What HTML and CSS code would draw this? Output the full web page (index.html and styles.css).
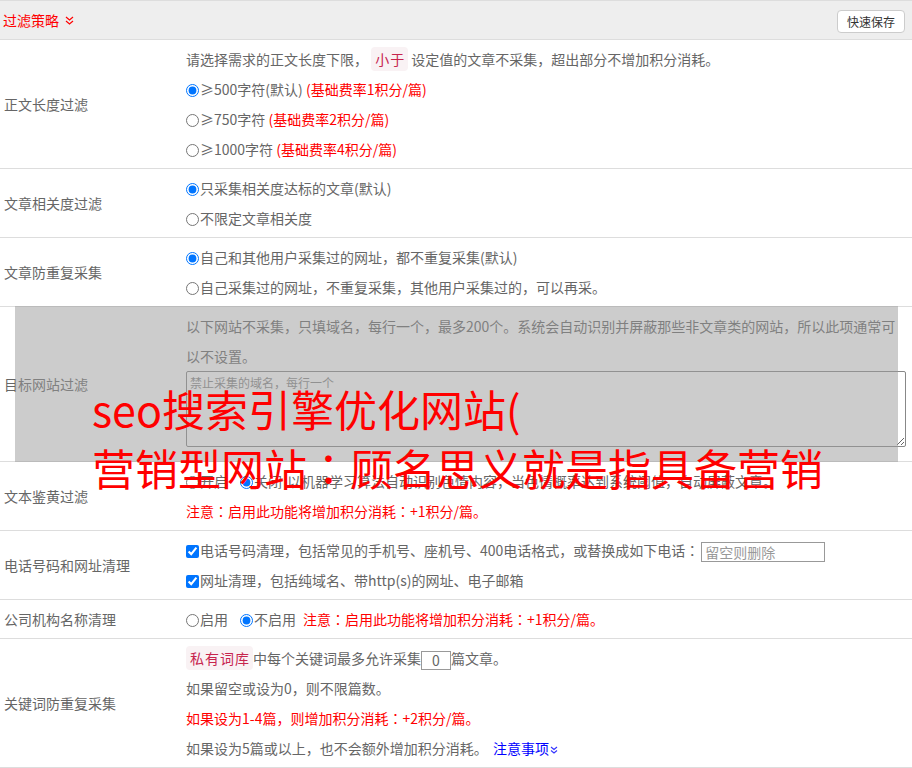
FILE: index.html
```html
<!DOCTYPE html>
<html lang="zh-CN">
<head>
<meta charset="utf-8">
<title>过滤策略</title>
<link rel="stylesheet" href="styles.css">
</head>
<body>
<div class="panel">
  <div class="panel-head">
    <span class="title">过滤策略
      <svg class="chev" width="9" height="9" viewBox="0 0 9 9"><path d="M1 1 L4.5 4 L8 1 M1 5 L4.5 8 L8 5" fill="none" stroke="#f00" stroke-width="1.2"/></svg>
    </span>
    <button class="btn">快速保存</button>
  </div>

  <div class="row">
    <div class="label">正文长度过滤</div>
    <div class="content">
      <div class="line">请选择需求的正文长度下限， <code class="tag">小于</code> 设定值的文章不采集，超出部分不增加积分消耗。</div>
      <div class="line"><input class="radio" type="radio" name="len" checked>≥500字符(默认) <span class="red">(基础费率1积分/篇)</span></div>
      <div class="line"><input class="radio" type="radio" name="len">≥750字符 <span class="red">(基础费率2积分/篇)</span></div>
      <div class="line"><input class="radio" type="radio" name="len">≥1000字符 <span class="red">(基础费率4积分/篇)</span></div>
    </div>
  </div>

  <div class="row">
    <div class="label">文章相关度过滤</div>
    <div class="content">
      <div class="line"><input class="radio" type="radio" name="rel" checked>只采集相关度达标的文章(默认)</div>
      <div class="line"><input class="radio" type="radio" name="rel">不限定文章相关度</div>
    </div>
  </div>

  <div class="row">
    <div class="label">文章防重复采集</div>
    <div class="content">
      <div class="line"><input class="radio" type="radio" name="dup" checked>自己和其他用户采集过的网址，都不重复采集(默认)</div>
      <div class="line"><input class="radio" type="radio" name="dup">自己采集过的网址，不重复采集，其他用户采集过的，可以再采。</div>
    </div>
  </div>

  <div class="row">
    <div class="label">目标网站过滤</div>
    <div class="content">
      <div class="line">以下网站不采集，只填域名，每行一个，最多200个。系统会自动识别并屏蔽那些非文章类的网站，所以此项通常可</div>
      <div class="line">以不设置。</div>
      <textarea class="area" placeholder="禁止采集的域名，每行一个"></textarea>
    </div>
  </div>

  <div class="row">
    <div class="label">文本鉴黄过滤</div>
    <div class="content">
      <div class="line"><label class="opt"><input class="radio" type="radio" name="porn">开启</label><label class="opt last"><input class="radio" type="radio" name="porn" checked>关闭</label>以机器学习算法自动识别色情内容，当色情概率达到系统阈值，自动屏蔽文章。</div>
      <div class="line red">注意<span class="colon" lang="zh-TW">：</span>启用此功能将增加积分消耗<span class="colon" lang="zh-TW">：</span>+1积分/篇。</div>
    </div>
  </div>

  <div class="row">
    <div class="label">电话号码和网址清理</div>
    <div class="content">
      <div class="line"><input class="check" type="checkbox" checked>电话号码清理，包括常见的手机号、座机号、400电话格式，或替换成如下电话<span class="colon" lang="zh-TW">：</span><input class="phone" type="text" placeholder="留空则删除"></div>
      <div class="line"><input class="check" type="checkbox" checked>网址清理，包括纯域名、带http(s)的网址、电子邮箱</div>
    </div>
  </div>

  <div class="row">
    <div class="label">公司机构名称清理</div>
    <div class="content">
      <div class="line"><label class="opt"><input class="radio" type="radio" name="org">启用</label><label class="opt last2"><input class="radio" type="radio" name="org" checked>不启用</label><span class="red">注意<span class="colon" lang="zh-TW">：</span>启用此功能将增加积分消耗<span class="colon" lang="zh-TW">：</span>+1积分/篇。</span></div>
    </div>
  </div>

  <div class="row">
    <div class="label">关键词防重复采集</div>
    <div class="content">
      <div class="line"><code class="tag">私有词库</code>中每个关键词最多允许采集<input class="num" type="text" value="0">篇文章。</div>
      <div class="line">如果留空或设为0，则不限篇数。</div>
      <div class="line red">如果设为1-4篇，则增加积分消耗<span class="colon" lang="zh-TW">：</span>+2积分/篇。</div>
      <div class="line">如果设为5篇或以上，也不会额外增加积分消耗。 <a class="link">注意事项<svg class="chev-s" width="8" height="8" viewBox="0 0 8 8"><path d="M1 1 L4 3.5 L7 1 M1 4.5 L4 7 L7 4.5" fill="none" stroke="#33f" stroke-width="1.1"/></svg></a></div>
    </div>
  </div>

  <div class="mask"></div>
  <div class="promo">seo搜索引擎优化网站(<br>营销型网站<span class="colon" lang="zh-TW">：</span>顾名思义就是指具备营销</div>
</div>
</body>
</html>
```

FILE: styles.css
```css
html, body {
  margin: 0;
  padding: 0;
  background: #fff;
  overflow: hidden;
}
body {
  font-family: "Noto Sans CJK SC", sans-serif;
  font-size: 14px;
  color: #666;
}
.panel {
  position: relative;
  width: 912px;
}
.panel-head {
  height: 38px;
  border-top: 1px solid #ddd;
  border-bottom: 1px solid #ddd;
  background: #eee;
  display: flex;
  align-items: center;
  justify-content: space-between;
  padding: 0 7px 0 3px;
}
.title {
  color: #f00;
  font-size: 14px;
  display: flex;
  align-items: center;
  gap: 6px;
}
.btn {
  height: 23px;
  width: 68px;
  padding: 0;
  border: 1px solid #ccc;
  border-radius: 4px;
  background: #fff;
  color: #333;
  font-family: "Noto Sans CJK SC", sans-serif;
  font-size: 12px;
  line-height: 21px;
  margin-top: 3px;
}
.row {
  display: grid;
  grid-template-columns: 186px 1fr;
  align-items: center;
  padding: 4px 0;
  border-bottom: 1px solid #ddd;
}
.label {
  padding-left: 4px;
  color: #666;
}
.line {
  line-height: 30px;
  height: 30px;
  white-space: nowrap;
}
.red {
  color: #f00;
}
.colon {
  font-family: "Noto Sans CJK TC", sans-serif;
}
.tag {
  font-family: "Noto Sans CJK SC", sans-serif;
  font-size: 14px;
  letter-spacing: 1px;
  color: #c7254e;
  background: #f9f2f4;
  border-radius: 4px;
  padding: 2px 3px 2px 4px;
}
.radio, .check {
  margin: 0 1px 0 0;
  width: 13px;
  height: 13px;
  vertical-align: -2px;
}
.opt {
  margin-right: 12px;
}
.opt.last {
  margin-right: 5px;
}
.opt.last2 {
  margin-right: 7px;
}
.area {
  display: block;
  box-sizing: border-box;
  width: 720px;
  height: 76px;
  margin: 0 0 10px 0;
  border: 1px solid #888;
  border-radius: 2px;
  background: transparent;
  font-family: "Noto Sans CJK SC", sans-serif;
  font-size: 12px;
  padding: 2px 3px;
  resize: vertical;
}
.area::placeholder {
  color: #888;
}
.phone {
  box-sizing: border-box;
  width: 124px;
  height: 20px;
  margin-left: 2px;
  border: 1px solid #999;
  padding: 0 3px;
  font-family: "Noto Sans CJK SC", sans-serif;
  font-size: 14px;
  vertical-align: middle;
}
.phone::placeholder {
  color: #999;
}
.num {
  box-sizing: border-box;
  width: 30px;
  height: 19px;
  border: 1px solid #999;
  text-align: center;
  padding: 0;
  font-family: "Noto Sans CJK SC", sans-serif;
  font-size: 14px;
  color: #666;
  vertical-align: middle;
}
.link {
  color: #00f;
  margin-left: 2px;
}
.chev-s {
  margin-left: 1px;
  vertical-align: 0;
}
.mask {
  position: absolute;
  left: 15px;
  top: 306px;
  width: 883px;
  height: 156px;
  background: rgba(153, 153, 153, 0.5);
}
.promo {
  position: absolute;
  left: 92px;
  top: 379px;
  color: #f00;
  font-size: 43px;
  line-height: 59px;
  white-space: nowrap;
}
```
